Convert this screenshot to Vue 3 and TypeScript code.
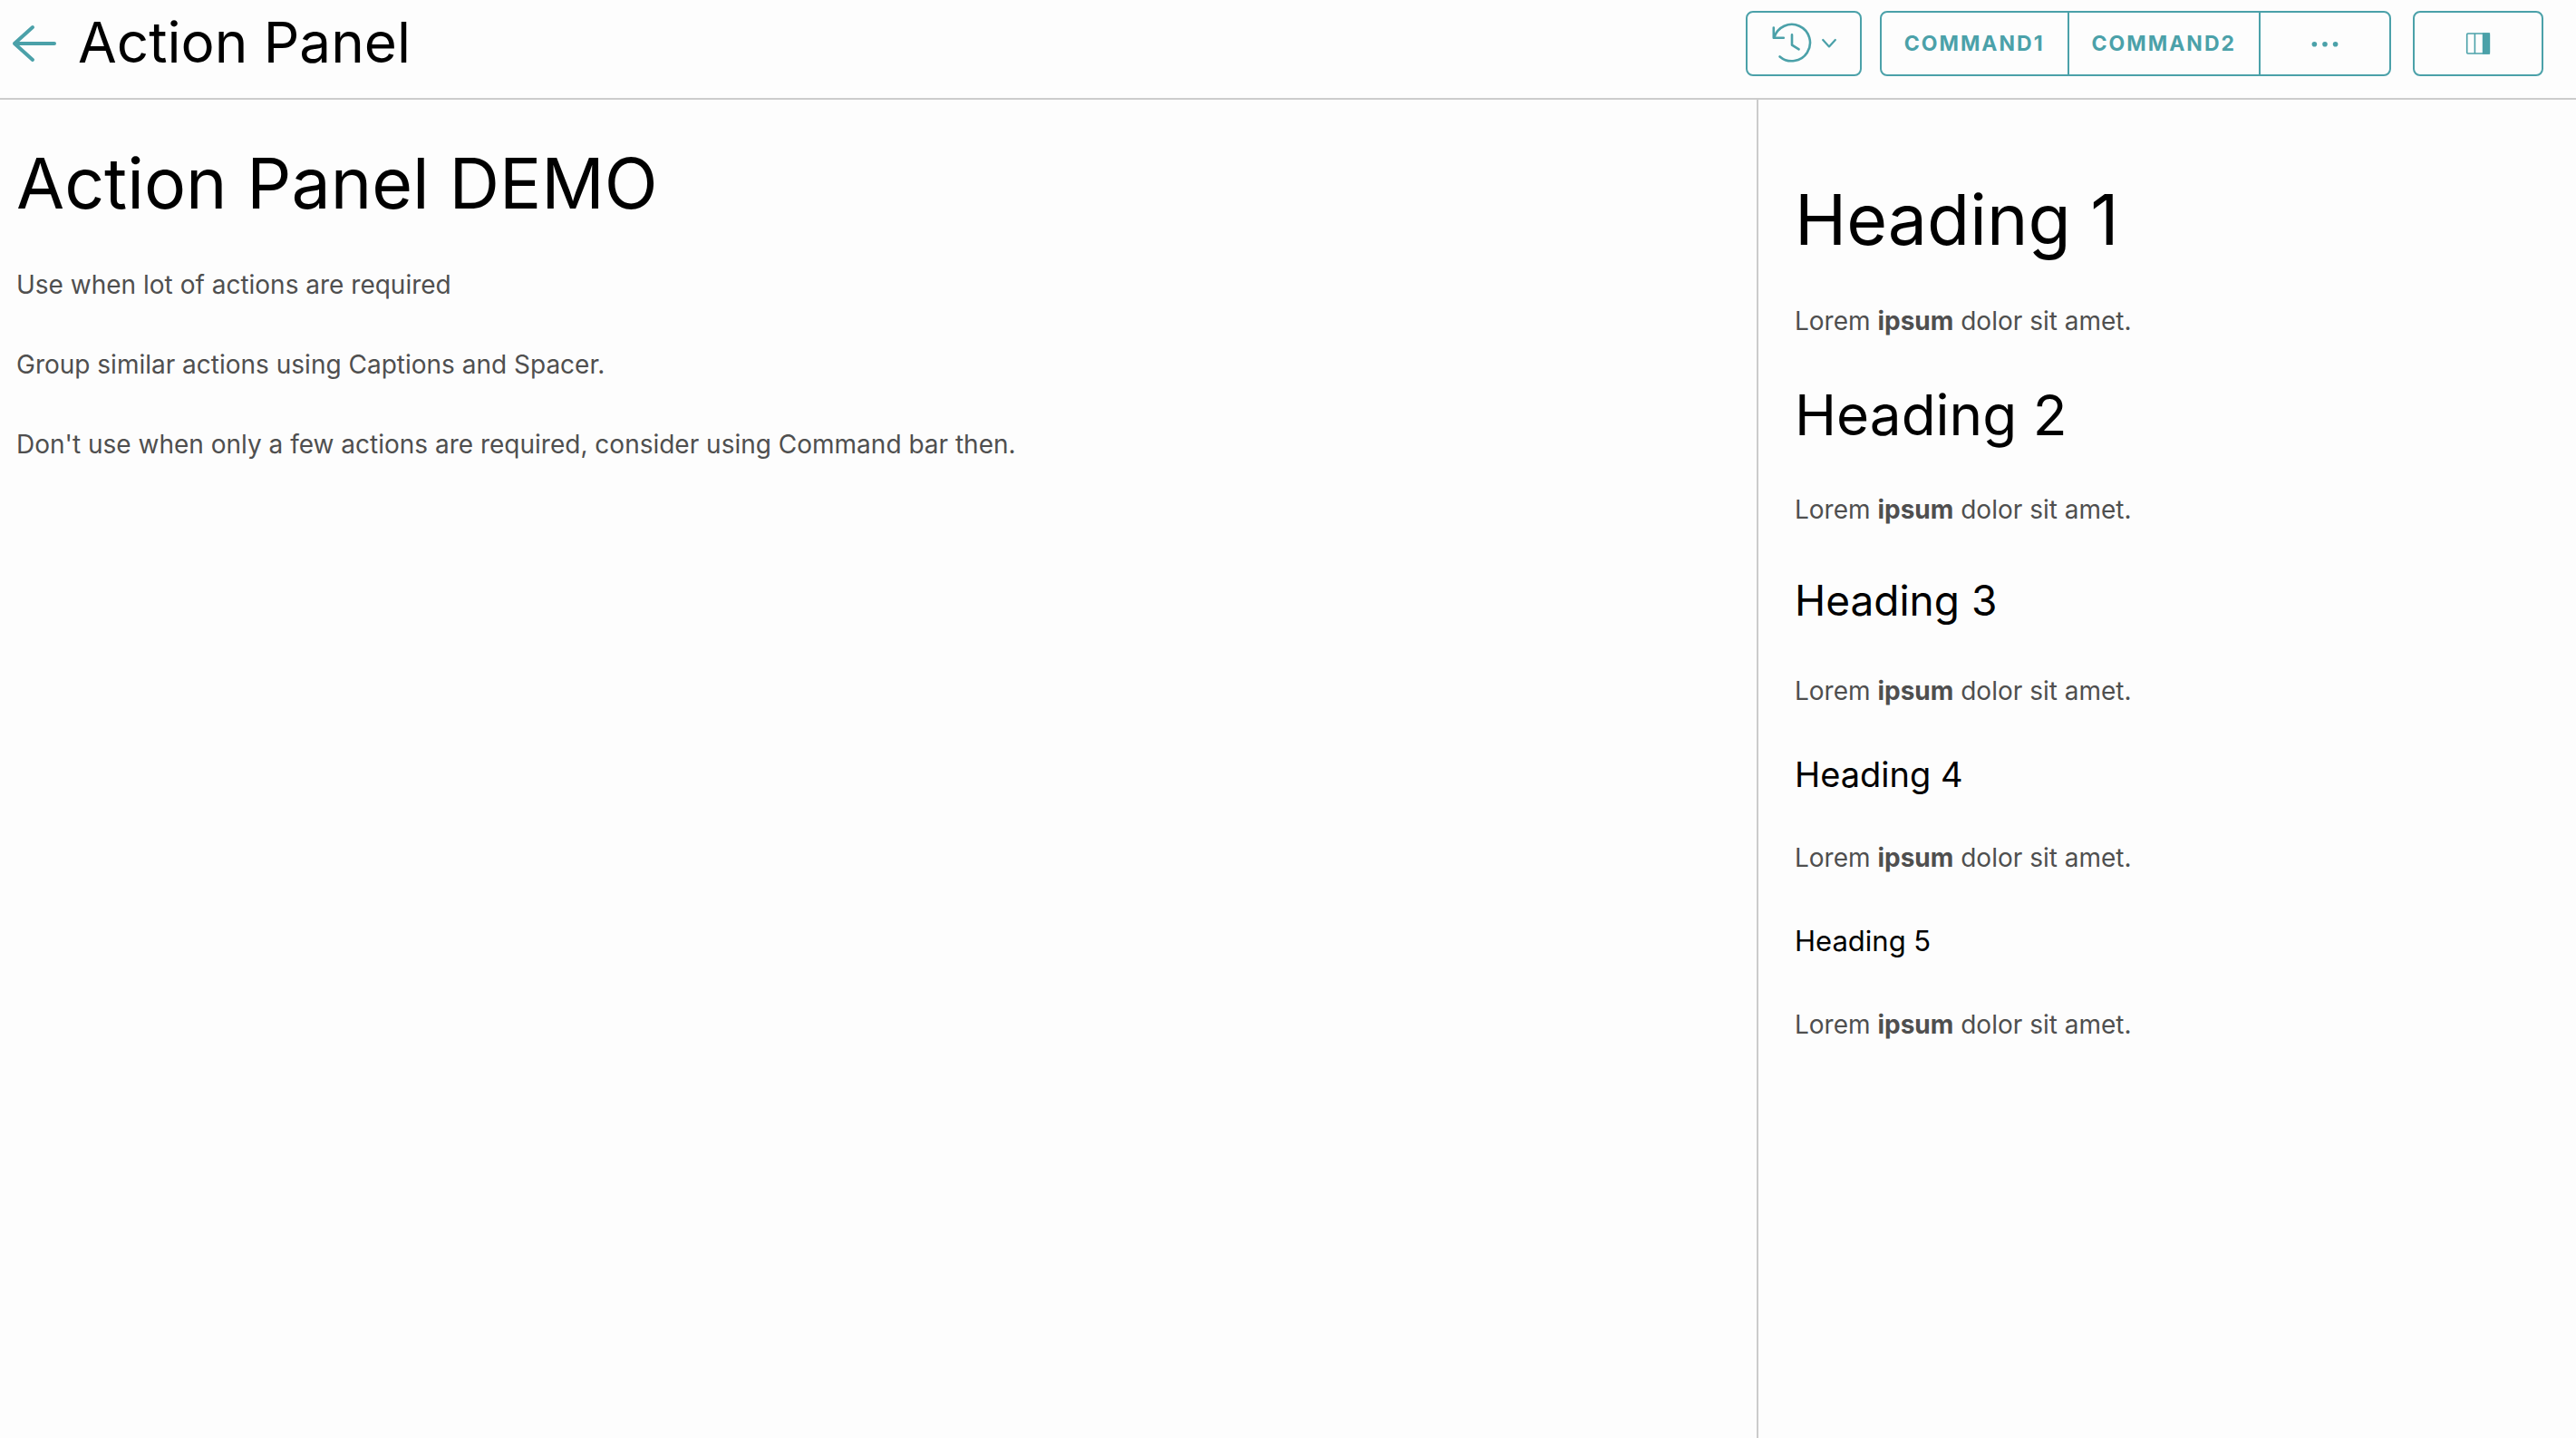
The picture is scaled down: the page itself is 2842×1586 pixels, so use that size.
<script setup lang="ts">
interface Sample {
  tag: 'h1' | 'h2' | 'h3' | 'h4' | 'h5'
  title: string
}

const commands: string[] = ['Command1', 'Command2']

const notes: string[] = [
  'Use when lot of actions are required',
  'Group similar actions using Captions and Spacer.',
  "Don't use when only a few actions are required, consider using Command bar then.",
]

const samples: Sample[] = [
  { tag: 'h1', title: 'Heading 1' },
  { tag: 'h2', title: 'Heading 2' },
  { tag: 'h3', title: 'Heading 3' },
  { tag: 'h4', title: 'Heading 4' },
  { tag: 'h5', title: 'Heading 5' },
]
</script>

<template>
  <div class="page">
    <header class="bar">
      <button class="back" type="button" aria-label="Back">
        <svg width="56" height="48" viewBox="0 0 56 48" fill="none" stroke="currentColor" stroke-width="4" stroke-linecap="round" stroke-linejoin="round">
          <path d="M52 24H8M28 6L8 24l20 18" />
        </svg>
      </button>
      <span class="title">Action Panel</span>

      <button class="btn history" type="button" aria-label="History">
        <svg width="46" height="48" viewBox="0 0 46 48" fill="none" stroke="currentColor" stroke-width="2.6" stroke-linecap="round" stroke-linejoin="round">
          <path d="M2.8 6.6v11.2h11" />
          <path d="M3.4 17.4A20.2 20.2 0 1 1 9.6 38.4" />
          <path d="M23 14.4v11.2l7.6 4.8" />
        </svg>
        <svg width="16" height="16" viewBox="0 0 16 16" fill="none" stroke="currentColor" stroke-width="2.2" stroke-linecap="round" stroke-linejoin="round">
          <path d="M1.2 4L8 11.4 14.8 4" />
        </svg>
      </button>

      <div class="group">
        <button v-for="c in commands" :key="c" class="segment" type="button">{{ c }}</button>
        <button class="segment more" type="button" aria-label="More commands">
          <svg width="32" height="8" viewBox="0 0 32 8" fill="currentColor">
            <circle cx="4.4" cy="4.8" r="2.8" />
            <circle cx="16" cy="4.8" r="2.8" />
            <circle cx="27.6" cy="4.8" r="2.8" />
          </svg>
        </button>
      </div>

      <button class="btn toggle" type="button" aria-label="Toggle action panel">
        <svg width="28" height="24" viewBox="0 0 28 24" fill="none" stroke="currentColor" stroke-width="1.6">
          <rect x="1.7" y="1" width="24.6" height="22" rx="1" />
          <path d="M10.4 1v22" />
          <path d="M19.6 1h6.7v22h-6.7z" fill="currentColor" />
        </svg>
      </button>
    </header>

    <div class="body">
      <main class="content">
        <h1>Action Panel DEMO</h1>
        <p v-for="n in notes" :key="n">{{ n }}</p>
      </main>
      <aside class="panel">
        <template v-for="s in samples" :key="s.tag">
          <component :is="s.tag">{{ s.title }}</component>
          <p>Lorem <strong>ipsum</strong> dolor sit amet.</p>
        </template>
      </aside>
    </div>
  </div>
</template>

<style>
body {
  background: #fdfdfd;
}
</style>

<style scoped>
.page {
  display: flex;
  flex-direction: column;
  min-height: 100vh;
  color: #4f4f4f;
  font-family: Inter, sans-serif;
  font-size: 28px;
  line-height: 48px;
}

.bar {
  display: flex;
  align-items: flex-start;
  padding: 12px 36px 24px 8px;
  border-bottom: 2px solid #ccc;
}

button {
  display: flex;
  align-items: center;
  justify-content: center;
  box-sizing: border-box;
  margin: 0;
  padding: 0;
  border: 0;
  background: none;
  color: #4ba1a9;
  font: inherit;
  cursor: pointer;
}

.back {
  width: 56px;
  height: 72px;
}

.title {
  flex: 1;
  margin-left: 22px;
  color: #000;
  font-size: 62px;
  font-weight: 400;
  line-height: 70px;
}

.btn {
  height: 72px;
  border: 2px solid #4ba1a9;
  border-radius: 8px;
}

.history {
  gap: 10px;
  width: 128px;
}

.group {
  display: flex;
  box-sizing: border-box;
  height: 72px;
  margin: 0 24px 0 20px;
  border: 2px solid #4ba1a9;
  border-radius: 8px;
}

.segment {
  padding: 0 25px;
  font-size: 23px;
  font-weight: 700;
  letter-spacing: 2px;
  text-transform: uppercase;
}

.segment + .segment {
  border-left: 2px solid #4ba1a9;
}

.more,
.toggle {
  width: 144px;
}

.body {
  display: flex;
  flex: 1;
}

.content {
  flex: 1;
  padding: 44px 18px;
}

.panel {
  box-sizing: border-box;
  width: 904px;
  padding: 84px 40px;
  border-left: 2px solid #ccc;
}

h1,
h2,
h3,
h4,
h5 {
  margin: 40px 0 0;
  color: #000;
  font-weight: 400;
}

h1 {
  margin-top: 0;
  font-size: 77px;
  line-height: 96px;
}

h2 {
  font-size: 62px;
  line-height: 80px;
}

h3 {
  font-size: 46px;
  line-height: 72px;
}

h4 {
  font-size: 38px;
  line-height: 56px;
}

h5 {
  font-size: 31px;
  line-height: 56px;
}

p {
  margin: 40px 0 0;
}

strong {
  font-weight: 700;
}
</style>
